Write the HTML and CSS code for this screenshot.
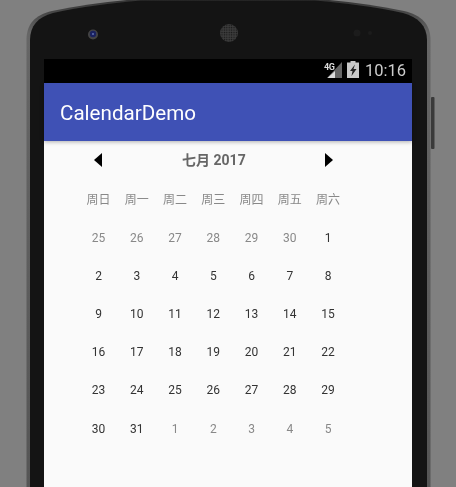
FILE: index.html
```html
<!DOCTYPE html>
<html lang="zh">
<head>
<meta charset="utf-8">
<title>CalendarDemo</title>
<link rel="stylesheet" href="styles.css">
</head>
<body>
<div class="stage">
  <svg class="shell" width="456" height="487" viewBox="0 0 456 487">
    <defs>
      <linearGradient id="edge" x1="0" y1="0" x2="0" y2="1">
        <stop offset="0" stop-color="#333"/>
        <stop offset="0.07" stop-color="#666"/>
        <stop offset="1" stop-color="#555"/>
      </linearGradient>
      <pattern id="mesh" width="2.4" height="2.4" patternUnits="userSpaceOnUse">
        <rect width="2.4" height="2.4" fill="#3c3c3c"/>
        <circle cx="1.2" cy="1.2" r="0.7" fill="#161616"/>
      </pattern>
    </defs>
    <rect x="431" y="97" width="3.500" height="52" rx="1" fill="#3a3a3a"/>
    <path d="M26.500 490V40C26.500 24 35 15 52 11C80 5 110 1 140 -1L316 -1C346 1 376 5 404 11C421 15 430.500 24 430.500 40V490Z" fill="url(#edge)"/>
    <path d="M30 490V40C30 26 38 17 53 13C81 7 111 3 141 0.500L315 0.500C345 3 375 7 403 13C418 17 427 26 427 40V490Z" fill="#141414"/>
    <circle cx="93" cy="34.500" r="5" fill="#444"/>
    <circle cx="93" cy="34" r="3.200" fill="#1a2260"/>
    <circle cx="93" cy="34" r="1" fill="#6070b0"/>
    <circle cx="229" cy="33" r="9" fill="url(#mesh)"/>
    <circle cx="357" cy="33" r="3.500" fill="#1c1c1c"/>
    <circle cx="370" cy="33" r="2" fill="#1c1c1c"/>
  </svg>
  <main class="screen">
    <div class="statusbar">
      <svg class="status-signal" width="15" height="16" viewBox="0 0 15 16">
        <path d="M15 0V16H0Z" fill="#666"/>
        <path d="M8 9V16H0.500Z" fill="#ddd"/>
      </svg>
      <span class="net">4G</span>
      <svg class="status-battery" width="12" height="17" viewBox="0 0 12 17">
        <path d="M3.500 0H8.500V1.500H12V17H0V1.500H3.500Z" fill="#c8c8c8"/>
        <path d="M8 3.500L3 10H5.500L4.500 15L9.500 8H6.500Z" fill="#222"/>
      </svg>
      <span class="clock">10:16</span>
    </div>
    <header class="toolbar">CalendarDemo</header>
    <section class="calendar">
      <div class="month-bar">
        <svg class="arrow" width="8" height="14" viewBox="0 0 8 14"><path d="M8 0V14L0 7Z"/></svg>
        <span class="month-title">七月 2017</span>
        <svg class="arrow" width="8" height="14" viewBox="0 0 8 14"><path d="M0 0V14L8 7Z"/></svg>
      </div>
      <div class="grid">
        <span class="cell week">周日</span><span class="cell week">周一</span><span class="cell week">周二</span><span class="cell week">周三</span><span class="cell week">周四</span><span class="cell week">周五</span><span class="cell week">周六</span>
        <span class="cell muted">25</span><span class="cell muted">26</span><span class="cell muted">27</span><span class="cell muted">28</span><span class="cell muted">29</span><span class="cell muted">30</span><span class="cell">1</span>
        <span class="cell">2</span><span class="cell">3</span><span class="cell">4</span><span class="cell">5</span><span class="cell">6</span><span class="cell">7</span><span class="cell">8</span>
        <span class="cell">9</span><span class="cell">10</span><span class="cell">11</span><span class="cell">12</span><span class="cell">13</span><span class="cell">14</span><span class="cell">15</span>
        <span class="cell">16</span><span class="cell">17</span><span class="cell">18</span><span class="cell">19</span><span class="cell">20</span><span class="cell">21</span><span class="cell">22</span>
        <span class="cell">23</span><span class="cell">24</span><span class="cell">25</span><span class="cell">26</span><span class="cell">27</span><span class="cell">28</span><span class="cell">29</span>
        <span class="cell">30</span><span class="cell">31</span><span class="cell muted">1</span><span class="cell muted">2</span><span class="cell muted">3</span><span class="cell muted">4</span><span class="cell muted">5</span>
      </div>
    </section>
  </main>
</div>
</body>
</html>
```
FILE: styles.css
```css
* { box-sizing: border-box; }
html, body { margin: 0; height: 100%; overflow: hidden; }
body { background: #808080; font-family: Roboto, "Noto Sans CJK SC", sans-serif; }
.stage { position: relative; width: 456px; height: 487px; overflow: hidden; padding: 59px 44px 0; }
.shell { position: absolute; left: 0; top: 0; }
.screen { position: relative; width: 368px; height: 428px; background: #fafafa; display: flex; flex-direction: column; }
.statusbar { position: relative; flex: none; height: 24px; background: #000; display: flex; align-items: center; justify-content: flex-end; padding-right: 6px; }
.status-signal { margin-right: 5px; margin-top: -3px; }
.net { position: absolute; right: 77px; top: 4px; font-size: 9px; font-weight: 700; color: #ddd; letter-spacing: -0.3px; line-height: 9px; will-change: transform; }
.status-battery { margin-right: 6px; margin-top: -3px; }
.clock { color: #ccc; font-size: 16.5px; line-height: 24px; will-change: transform; }
.toolbar { flex: none; height: 58px; background: #3f51b5; color: #fff; font-size: 20.6px; line-height: 60px; padding-left: 16px; box-shadow: 0 1px 4px rgba(0, 0, 0, 0.3); position: relative; }
.calendar { flex: 1; padding-left: 35.4px; will-change: transform; }
.month-bar { display: flex; width: 268px; height: 38px; align-items: center; justify-content: space-between; padding: 0 14px 0 15px; }
.arrow { display: block; fill: #000; }
.month-title { font-size: 14px; font-weight: 700; color: #666; padding-bottom: 2px; }
.grid { display: grid; grid-template-columns: repeat(7, 38.25px); grid-template-rows: 39.5px; grid-auto-rows: 38.2px; }
.cell { display: flex; align-items: center; justify-content: center; font-size: 12px; color: #333; }
.week, .muted { color: #888; }
```
